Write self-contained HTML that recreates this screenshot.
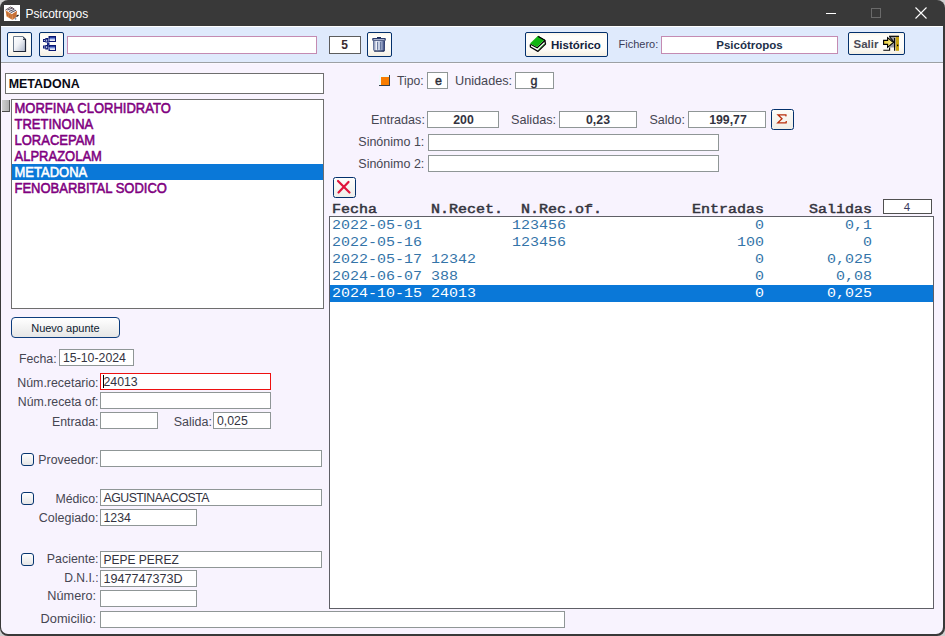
<!DOCTYPE html>
<html><head><meta charset="utf-8">
<style>
*{box-sizing:border-box;margin:0;padding:0}
html,body{width:945px;height:636px;overflow:hidden;background:#cfcfcf;font-family:"Liberation Sans",sans-serif;}
.a{position:absolute}
svg{position:absolute;overflow:visible}
</style></head><body>
<div class="a" style="left:0px;top:0px;width:945px;height:636px;background:#393939;border-radius:8px 8px 8px 8px;"></div>
<div class="a" style="left:1px;top:26px;width:942px;height:608px;background:#f8f3fe;border-radius:0 0 7px 7px;"></div>
<div class="a" style="left:1px;top:26px;width:942px;height:1px;background:#ffffff;"></div>
<div class="a" style="left:1px;top:27px;width:942px;height:35px;background:#dfeafc;"></div>
<div class="a" style="left:1px;top:62px;width:942px;height:1px;background:#9da0a4;"></div>
<div class="a" style="left:1px;top:63px;width:942px;height:1px;background:#fbf8ff;"></div>
<div class="a" style="left:25.5px;top:8.34px;font-size:12px;line-height:12px;font-weight:normal;color:#ffffff;font-family:'Liberation Sans',sans-serif;white-space:pre;">Psicotropos</div>
<svg style="left:4px;top:5px" width="16" height="16" viewBox="0 0 16 16">
<rect x="0" y="0" width="16" height="16" fill="#fff"/>
<path d="M1.5 5 L2.5 11.5 L8.5 15 L8 9 Z" fill="#de8a45"/>
<path d="M8 9 L13 5.5 L12.5 12 L8.5 15 Z" fill="#c87035"/>
<path d="M1.5 5 L6.5 2 L13 5.5 L8 9 Z" fill="#f2eef2"/>
<path d="M1.5 5 L6.5 2 L10 3.8" fill="none" stroke="#6a5a60" stroke-width="1"/>
<path d="M3.5 5 L8.5 3 M5 6.5 L10.5 4.2 M6.5 7.8 L12 5.2" stroke="#404050" stroke-width="0.9"/>
<path d="M3 7 L3.5 11 M5 8.5 L5.5 12.5 M7 9.5 L7 13.5" stroke="#8a4020" stroke-width="0.9" opacity="0.6"/>
<path d="M12.5 11.5 L14.5 10" stroke="#111" stroke-width="1.4"/>
<path d="M11 13 L12 14.5" stroke="#8090a8" stroke-width="1.5"/>
</svg>
<div class="a" style="left:826px;top:13px;width:10px;height:1px;background:#ffffff;"></div>
<div class="a" style="left:871px;top:8px;width:10px;height:10px;border:1px solid #6a6a6a;"></div>
<svg style="left:915px;top:7px" width="12" height="12" viewBox="0 0 12 12"><path d="M0.5 0.5 L11.5 11.5 M11.5 0.5 L0.5 11.5" stroke="#fff" stroke-width="1.1"/></svg>
<div class="a" style="left:7px;top:32px;width:25px;height:25px;border:1px solid #03306c;border-radius:2px;background:linear-gradient(#fbf3e4 0px,#fffefb 3px,#fdfcf8 70%,#f4eee2 100%);"></div>
<svg style="left:13px;top:36px" width="14" height="17" viewBox="0 0 14 17">
<defs><linearGradient id="gd" x1="0" y1="0" x2="1" y2="1"><stop offset="0" stop-color="#ffffff"/><stop offset="0.45" stop-color="#f0f2f6"/><stop offset="1" stop-color="#aab4c8"/></linearGradient></defs>
<path d="M0.5 0.5 H10 L12.5 3 V15.5 H0.5 Z" fill="url(#gd)" stroke="#6c7a8c" stroke-width="1"/>
<path d="M12.5 3 V15.5 H0.5" fill="none" stroke="#1e2636" stroke-width="1.2"/>
<path d="M10 0.5 L12.5 3 L12.5 4 L10 4 Z" fill="#1e2636"/>
<path d="M10.3 1.5 L10.3 3.2 L11.6 3.2 Z" fill="#d8e0f0"/>
</svg>
<div class="a" style="left:39px;top:32px;width:25px;height:25px;border:1px solid #03306c;border-radius:2px;background:linear-gradient(#fbf3e4 0px,#fffefb 3px,#fdfcf8 70%,#f4eee2 100%);"></div>
<svg style="left:43px;top:36px" width="14" height="16" viewBox="0 0 14 16">
<defs><linearGradient id="gt" x1="0" y1="0" x2="0" y2="1"><stop offset="0" stop-color="#2a48b0"/><stop offset="0.8" stop-color="#c8d6fa"/><stop offset="1" stop-color="#ffffff"/></linearGradient></defs>
<rect x="5.5" y="0" width="7.5" height="6" fill="#0a1670"/>
<rect x="7" y="1.3" width="5" height="3.4" fill="url(#gt)"/>
<rect x="7" y="3.8" width="5" height="0.9" fill="#ffffff"/>
<rect x="5.5" y="9" width="7.5" height="6" fill="#0a1670"/>
<rect x="7" y="10.3" width="5" height="3.4" fill="url(#gt)"/>
<rect x="7" y="12.8" width="5" height="0.9" fill="#ffffff"/>
<rect x="2.3" y="2" width="3.2" height="4.5" fill="#0a1670"/>
<rect x="0" y="3" width="2.5" height="3" fill="#0a1670"/>
<rect x="0.9" y="4" width="0.9" height="1" fill="#d8e4ff"/>
<rect x="3.2" y="3.6" width="1" height="2" fill="#e4ecff"/>
<rect x="5.6" y="2.5" width="0.9" height="2.5" fill="#c0d0ff"/>
<rect x="2.3" y="9" width="3.2" height="4.5" fill="#0a1670"/>
<rect x="0" y="9.5" width="2.5" height="3" fill="#0a1670"/>
<rect x="0.9" y="10.5" width="0.9" height="1" fill="#d8e4ff"/>
<rect x="3.2" y="10.2" width="1" height="2" fill="#e4ecff"/>
<rect x="5.6" y="11" width="0.9" height="2.5" fill="#c0d0ff"/>
<rect x="4" y="6.5" width="2.5" height="2.5" fill="#1a2a8a"/>
</svg>
<div class="a" style="left:67px;top:36px;width:250px;height:18px;background:#fff;border:1px solid #c48bb2;"></div>
<div class="a" style="left:329px;top:36px;width:32px;height:18px;background:#fff;border:1px solid #5d5d5d;"></div>
<div class="a" style="left:144.5px;width:400px;text-align:center;top:39.34px;font-size:12px;line-height:12px;font-weight:bold;color:#3a2a30;font-family:'Liberation Sans',sans-serif;white-space:pre;">5</div>
<div class="a" style="left:367px;top:32px;width:25px;height:25px;border:1px solid #03306c;border-radius:2px;background:linear-gradient(#fbf3e4 0px,#fffefb 3px,#fdfcf8 70%,#f4eee2 100%);"></div>
<svg style="left:369px;top:34px" width="22" height="20" viewBox="0 0 22 20">
<defs><linearGradient id="gb" x1="0" y1="0" x2="1" y2="0"><stop offset="0" stop-color="#6a78a0"/><stop offset="0.3" stop-color="#f2f5fb"/><stop offset="0.65" stop-color="#b4c0da"/><stop offset="1" stop-color="#3a4a80"/></linearGradient></defs>
<rect x="8" y="3" width="4" height="1.3" fill="#1a2a55"/>
<path d="M4.1 6.8 H15.7 L15.2 17.6 H5.2 Z" fill="url(#gb)"/>
<rect x="3.2" y="4.1" width="13.6" height="2.7" rx="0.8" fill="#2a3a6a"/>
<rect x="4.5" y="5" width="11" height="0.8" fill="#c8d0e4"/>
<path d="M4.6 7 V16.5 M8.6 7.8 V15.8 M11.6 7.8 V15.8" stroke="#54648e" stroke-width="0.9"/>
<path d="M15.3 7 V17" stroke="#1e2e60" stroke-width="1"/>
<rect x="5.2" y="16.4" width="10" height="1.3" fill="#1a2a55"/>
</svg>
<div class="a" style="left:525px;top:32px;width:83px;height:25px;border:1px solid #03306c;border-radius:2px;background:linear-gradient(#fbf3e4 0px,#fffefb 3px,#fdfcf8 70%,#f4eee2 100%);"></div>
<svg style="left:529px;top:35px" width="18" height="18" viewBox="0 0 18 18">
<path d="M1.3 8.6 L8.3 12.4 L15.5 5.5 L16.3 9 L9 16 L1.4 11.8 Z" fill="#fff"/>
<path d="M8.8 1.3 L15.7 5.2 L16.5 9 L9 16.4 L1.4 12 L1.3 9.5" fill="none" stroke="#000" stroke-width="1.3" stroke-linejoin="round"/>
<path d="M1.6 9.2 L8.2 12.8 L15.6 5.7" fill="none" stroke="#000" stroke-width="1.3"/>
<path d="M1 8.5 L8.8 1 L15.3 5 L8.1 11.9 Z" fill="#12b412"/>
<path d="M9.2 14.6 L15.6 8.6" stroke="#3cc03c" stroke-width="0.8"/>
<path d="M9.2 1.4 L15.8 5.3 L16 6.5" fill="none" stroke="#000" stroke-width="1.2"/>
</svg>
<div class="a" style="left:551px;top:39.77px;font-size:11.5px;line-height:11.5px;font-weight:bold;color:#13223e;font-family:'Liberation Sans',sans-serif;white-space:pre;">Histórico</div>
<div class="a" style="left:618.5px;top:39.29px;font-size:11px;line-height:11px;font-weight:normal;color:#3c3c58;font-family:'Liberation Sans',sans-serif;white-space:pre;">Fichero:</div>
<div class="a" style="left:661px;top:36px;width:177px;height:18px;background:#fff;border:1px solid #c48bb2;"></div>
<div class="a" style="left:549.5px;width:400px;text-align:center;top:40.27px;font-size:11.5px;line-height:11.5px;font-weight:bold;color:#22304a;font-family:'Liberation Sans',sans-serif;white-space:pre;">Psicótropos</div>
<div class="a" style="left:848px;top:32px;width:57px;height:23px;border:1px solid #03306c;border-radius:2px;background:linear-gradient(#fbf3e4 0px,#fffefb 3px,#fdfcf8 70%,#f4eee2 100%);"></div>
<div class="a" style="left:853.5px;top:38.77px;font-size:11.5px;line-height:11.5px;font-weight:bold;color:#4b4b56;font-family:'Liberation Sans',sans-serif;white-space:pre;">Salir</div>
<svg style="left:880px;top:33px" width="22" height="20" viewBox="0 0 22 20">
<defs><linearGradient id="ga" x1="0" y1="0" x2="1" y2="0"><stop offset="0" stop-color="#e8c830"/><stop offset="1" stop-color="#fff8a0"/></linearGradient></defs>
<rect x="9.5" y="3.5" width="6" height="11" fill="#9a9aa0"/>
<rect x="15.7" y="3.6" width="3.3" height="14.2" fill="#c8a412"/>
<path d="M9 3.3 H19" stroke="#000" stroke-width="1.2"/>
<path d="M9.8 4 L14.3 9.5" stroke="#000" stroke-width="1.1"/>
<path d="M14.6 5 V17.8" stroke="#000" stroke-width="1.1"/>
<rect x="17" y="11.6" width="1.3" height="1.6" fill="#000"/>
<path d="M3.6 7.4 H7.6 V4.6 L13.4 9.5 L7.6 14.3 V11.4 H3.6 Z" fill="url(#ga)" stroke="#000" stroke-width="1.1" stroke-linejoin="miter"/>
<path d="M3.3 17.2 H9.6 V14.6" fill="none" stroke="#000" stroke-width="1.1"/>
</svg>
<div class="a" style="left:5px;top:73px;width:319px;height:21px;background:#fff;border:1px solid #6e6e6e;"></div>
<div class="a" style="left:8.7px;top:77.76px;font-size:12.45px;line-height:12.45px;font-weight:bold;color:#0a0a14;font-family:'Liberation Sans',sans-serif;white-space:pre;">METADONA</div>
<div class="a" style="left:2px;top:100px;width:8px;height:12px;background:linear-gradient(90deg,#d0d0d0,#b0b0b0);border-bottom:1px solid #4a4a4a;border-right:1px solid #5a5a5a;"></div>
<div class="a" style="left:11px;top:99px;width:313px;height:210px;background:#fff;border:1px solid #6e6e6e;"></div>
<div class="a" style="left:14.5px;top:101.60px;font-size:13.0px;line-height:13.0px;font-weight:normal;color:#800080;font-family:'Liberation Sans',sans-serif;white-space:pre;-webkit-text-stroke:0.5px #800080;transform:scaleY(1.08);transform-origin:0 11.00px;">MORFINA CLORHIDRATO</div>
<div class="a" style="left:14.5px;top:117.60px;font-size:13.0px;line-height:13.0px;font-weight:normal;color:#800080;font-family:'Liberation Sans',sans-serif;white-space:pre;-webkit-text-stroke:0.5px #800080;transform:scaleY(1.08);transform-origin:0 11.00px;">TRETINOINA</div>
<div class="a" style="left:14.5px;top:133.60px;font-size:13.0px;line-height:13.0px;font-weight:normal;color:#800080;font-family:'Liberation Sans',sans-serif;white-space:pre;-webkit-text-stroke:0.5px #800080;transform:scaleY(1.08);transform-origin:0 11.00px;">LORACEPAM</div>
<div class="a" style="left:14.5px;top:149.60px;font-size:13.0px;line-height:13.0px;font-weight:normal;color:#800080;font-family:'Liberation Sans',sans-serif;white-space:pre;-webkit-text-stroke:0.5px #800080;transform:scaleY(1.08);transform-origin:0 11.00px;">ALPRAZOLAM</div>
<div class="a" style="left:12px;top:164px;width:311px;height:16px;background:#0a78d8;"></div>
<div class="a" style="left:14.5px;top:165.60px;font-size:13.0px;line-height:13.0px;font-weight:normal;color:#ffffff;font-family:'Liberation Sans',sans-serif;white-space:pre;-webkit-text-stroke:0.5px #ffffff;transform:scaleY(1.08);transform-origin:0 11.00px;">METADONA</div>
<div class="a" style="left:14.5px;top:181.60px;font-size:13.0px;line-height:13.0px;font-weight:normal;color:#800080;font-family:'Liberation Sans',sans-serif;white-space:pre;-webkit-text-stroke:0.5px #800080;transform:scaleY(1.08);transform-origin:0 11.00px;">FENOBARBITAL SODICO</div>
<div class="a" style="left:11px;top:317px;width:109px;height:21px;border:1px solid #0d3d7d;border-radius:4px;background:linear-gradient(#ffffff,#e6e6e6);"></div>
<div class="a" style="left:31.2px;top:323.49px;font-size:11px;line-height:11px;font-weight:normal;color:#0e1a30;font-family:'Liberation Sans',sans-serif;white-space:pre;">Nuevo apunte</div>
<div class="a" style="left:19px;top:352.79px;font-size:12.3px;line-height:12.3px;font-weight:normal;color:#464652;font-family:'Liberation Sans',sans-serif;white-space:pre;">Fecha:</div>
<div class="a" style="left:59px;top:349px;width:75px;height:17px;background:#fff;border:1px solid #8f9696;"></div>
<div class="a" style="left:63px;top:352.09px;font-size:12.3px;line-height:12.3px;font-weight:normal;color:#333340;font-family:'Liberation Sans',sans-serif;white-space:pre;">15-10-2024</div>
<div class="a" style="right:846.5px;top:377.00px;font-size:12.4px;line-height:12.4px;font-weight:normal;color:#464652;font-family:'Liberation Sans',sans-serif;white-space:pre;">Núm.recetario:</div>
<div class="a" style="left:100px;top:373px;width:171px;height:17px;background:#fff;border:1px solid #ee1010;"></div>
<div class="a" style="left:103px;top:375px;width:1px;height:13px;background:#000;"></div>
<div class="a" style="left:103.5px;top:376.09px;font-size:12.3px;line-height:12.3px;font-weight:normal;color:#333340;font-family:'Liberation Sans',sans-serif;white-space:pre;">24013</div>
<div class="a" style="right:846.5px;top:396.29px;font-size:12.3px;line-height:12.3px;font-weight:normal;color:#464652;font-family:'Liberation Sans',sans-serif;white-space:pre;">Núm.receta of:</div>
<div class="a" style="left:100px;top:392px;width:171px;height:17px;background:#fff;border:1px solid #8f9696;"></div>
<div class="a" style="right:846.5px;top:416.29px;font-size:12.3px;line-height:12.3px;font-weight:normal;color:#464652;font-family:'Liberation Sans',sans-serif;white-space:pre;">Entrada:</div>
<div class="a" style="left:100px;top:412px;width:58px;height:17px;background:#fff;border:1px solid #8f9696;"></div>
<div class="a" style="right:733px;top:416.12px;font-size:12.5px;line-height:12.5px;font-weight:normal;color:#464652;font-family:'Liberation Sans',sans-serif;white-space:pre;">Salida:</div>
<div class="a" style="left:213px;top:412px;width:58px;height:17px;background:#fff;border:1px solid #8f9696;"></div>
<div class="a" style="left:217px;top:414.59px;font-size:12.3px;line-height:12.3px;font-weight:normal;color:#333340;font-family:'Liberation Sans',sans-serif;white-space:pre;">0,025</div>
<div class="a" style="left:21px;top:453px;width:13px;height:13px;border:1px solid #07356f;border-radius:3px;background:linear-gradient(#ffffff,#e6e6e6);"></div>
<div class="a" style="right:846.5px;top:454.29px;font-size:12.3px;line-height:12.3px;font-weight:normal;color:#464652;font-family:'Liberation Sans',sans-serif;white-space:pre;">Proveedor:</div>
<div class="a" style="left:100px;top:450px;width:222px;height:17px;background:#fff;border:1px solid #8f9696;"></div>
<div class="a" style="left:21px;top:492px;width:13px;height:13px;border:1px solid #07356f;border-radius:3px;background:linear-gradient(#ffffff,#e6e6e6);"></div>
<div class="a" style="right:846.5px;top:492.79px;font-size:12.3px;line-height:12.3px;font-weight:normal;color:#464652;font-family:'Liberation Sans',sans-serif;white-space:pre;">Médico:</div>
<div class="a" style="left:100px;top:489px;width:222px;height:17px;background:#fff;border:1px solid #8f9696;"></div>
<div class="a" style="left:103.5px;top:491.79px;font-size:12.3px;line-height:12.3px;font-weight:normal;color:#333340;font-family:'Liberation Sans',sans-serif;white-space:pre;letter-spacing:-0.5px;">AGUSTINAACOSTA</div>
<div class="a" style="right:846.5px;top:511.92px;font-size:12.5px;line-height:12.5px;font-weight:normal;color:#464652;font-family:'Liberation Sans',sans-serif;white-space:pre;">Colegiado:</div>
<div class="a" style="left:100px;top:509px;width:97px;height:17px;background:#fff;border:1px solid #8f9696;"></div>
<div class="a" style="left:103.5px;top:511.59px;font-size:12.3px;line-height:12.3px;font-weight:normal;color:#333340;font-family:'Liberation Sans',sans-serif;white-space:pre;">1234</div>
<div class="a" style="left:21px;top:553px;width:13px;height:13px;border:1px solid #07356f;border-radius:3px;background:linear-gradient(#ffffff,#e6e6e6);"></div>
<div class="a" style="right:846.5px;top:552.70px;font-size:12.4px;line-height:12.4px;font-weight:normal;color:#464652;font-family:'Liberation Sans',sans-serif;white-space:pre;">Paciente:</div>
<div class="a" style="left:100px;top:551px;width:222px;height:17px;background:#fff;border:1px solid #8f9696;"></div>
<div class="a" style="left:103.5px;top:553.84px;font-size:12px;line-height:12px;font-weight:normal;color:#333340;font-family:'Liberation Sans',sans-serif;white-space:pre;">PEPE PEREZ</div>
<div class="a" style="right:846.5px;top:572.06px;font-size:12.1px;line-height:12.1px;font-weight:normal;color:#464652;font-family:'Liberation Sans',sans-serif;white-space:pre;">D.N.I.:</div>
<div class="a" style="left:100px;top:570px;width:97px;height:17px;background:#fff;border:1px solid #8f9696;"></div>
<div class="a" style="left:103.5px;top:573.33px;font-size:12.6px;line-height:12.6px;font-weight:normal;color:#333340;font-family:'Liberation Sans',sans-serif;white-space:pre;">1947747373D</div>
<div class="a" style="right:849px;top:590.45px;font-size:12.7px;line-height:12.7px;font-weight:normal;color:#464652;font-family:'Liberation Sans',sans-serif;white-space:pre;">Número:</div>
<div class="a" style="left:100px;top:590px;width:97px;height:17px;background:#fff;border:1px solid #8f9696;"></div>
<div class="a" style="right:849px;top:613.16px;font-size:12.8px;line-height:12.8px;font-weight:normal;color:#464652;font-family:'Liberation Sans',sans-serif;white-space:pre;">Domicilio:</div>
<div class="a" style="left:100px;top:611px;width:465px;height:17px;background:#fff;border:1px solid #8f9696;"></div>
<div class="a" style="left:379px;top:75px;width:11px;height:11px;background:#eef8fc;"></div>
<div class="a" style="left:389px;top:75px;width:1px;height:11px;background:#34404c;"></div>
<div class="a" style="left:379px;top:85px;width:11px;height:1px;background:#34404c;"></div>
<div class="a" style="left:381px;top:77px;width:8px;height:8px;background:#f97d00;"></div>
<div class="a" style="left:397px;top:75.07px;font-size:12.2px;line-height:12.2px;font-weight:normal;color:#464652;font-family:'Liberation Sans',sans-serif;white-space:pre;">Tipo:</div>
<div class="a" style="left:427px;top:72px;width:21px;height:17px;background:#fff;border:1px solid #8f9696;"></div>
<div class="a" style="left:238.5px;width:400px;text-align:center;top:75.42px;font-size:12.5px;line-height:12.5px;font-weight:normal;color:#2a2a36;font-family:'Liberation Sans',sans-serif;white-space:pre;-webkit-text-stroke:0.4px #2a2a36;">e</div>
<div class="a" style="left:455px;top:75.45px;font-size:12.7px;line-height:12.7px;font-weight:normal;color:#464652;font-family:'Liberation Sans',sans-serif;white-space:pre;">Unidades:</div>
<div class="a" style="left:515px;top:72px;width:39px;height:17px;background:#fff;border:1px solid #8f9696;"></div>
<div class="a" style="left:334px;width:400px;text-align:center;top:75.42px;font-size:12.5px;line-height:12.5px;font-weight:normal;color:#2a2a36;font-family:'Liberation Sans',sans-serif;white-space:pre;-webkit-text-stroke:0.4px #2a2a36;">g</div>
<div class="a" style="left:371px;top:114.03px;font-size:12.6px;line-height:12.6px;font-weight:normal;color:#464652;font-family:'Liberation Sans',sans-serif;white-space:pre;">Entradas:</div>
<div class="a" style="left:427px;top:111px;width:72px;height:17px;background:#fff;border:1px solid #8f9696;"></div>
<div class="a" style="left:263.5px;width:400px;text-align:center;top:113.59px;font-size:12.3px;line-height:12.3px;font-weight:bold;color:#333340;font-family:'Liberation Sans',sans-serif;white-space:pre;">200</div>
<div class="a" style="left:511px;top:113.95px;font-size:12.7px;line-height:12.7px;font-weight:normal;color:#464652;font-family:'Liberation Sans',sans-serif;white-space:pre;">Salidas:</div>
<div class="a" style="left:559px;top:111px;width:78px;height:17px;background:#fff;border:1px solid #8f9696;"></div>
<div class="a" style="left:398px;width:400px;text-align:center;top:113.59px;font-size:12.3px;line-height:12.3px;font-weight:bold;color:#333340;font-family:'Liberation Sans',sans-serif;white-space:pre;">0,23</div>
<div class="a" style="left:649.5px;top:114.12px;font-size:12.5px;line-height:12.5px;font-weight:normal;color:#464652;font-family:'Liberation Sans',sans-serif;white-space:pre;">Saldo:</div>
<div class="a" style="left:688px;top:111px;width:78px;height:17px;background:#fff;border:1px solid #8f9696;"></div>
<div class="a" style="left:528px;width:400px;text-align:center;top:113.59px;font-size:12.3px;line-height:12.3px;font-weight:bold;color:#333340;font-family:'Liberation Sans',sans-serif;white-space:pre;">199,77</div>
<div class="a" style="left:771px;top:109px;width:23px;height:21px;border:1px solid #03306c;border-radius:2.5px;background:linear-gradient(#fdfcf8,#f0ede6);"></div>
<svg style="left:776.5px;top:113.5px" width="11" height="11" viewBox="0 0 11 11"><path d="M9 2.4 L8.9 0.8 H1 L5 4.8 L0.8 8.9 H9.1 L9.3 7" fill="none" stroke="#b82e0c" stroke-width="1.3" stroke-linejoin="miter"/></svg>
<div class="a" style="right:520.7px;top:136.12px;font-size:12.5px;line-height:12.5px;font-weight:normal;color:#464652;font-family:'Liberation Sans',sans-serif;white-space:pre;">Sinónimo 1:</div>
<div class="a" style="left:428px;top:134px;width:291px;height:17px;background:#fff;border:1px solid #8f9696;"></div>
<div class="a" style="right:520.7px;top:157.72px;font-size:12.5px;line-height:12.5px;font-weight:normal;color:#464652;font-family:'Liberation Sans',sans-serif;white-space:pre;">Sinónimo 2:</div>
<div class="a" style="left:428px;top:155px;width:291px;height:17px;background:#fff;border:1px solid #8f9696;"></div>
<div class="a" style="left:333px;top:177px;width:23px;height:21px;border:1px solid #03306c;border-radius:2.5px;background:linear-gradient(#fdfdfb,#eeeeea);"></div>
<svg style="left:337px;top:180px" width="14" height="14" viewBox="0 0 14 14"><path d="M1 1 L12.5 12.5 M11.5 2 L1.5 12.5" stroke="#e0143c" stroke-width="2.2" stroke-linecap="round"/></svg>
<div class="a" style="left:332px;top:202.31px;font-size:15px;line-height:15px;font-weight:normal;color:#34343e;font-family:'Liberation Mono',monospace;white-space:pre;-webkit-text-stroke:0.55px #34343e;transform:scaleY(0.82);transform-origin:0 11.49px;">Fecha</div>
<div class="a" style="left:431px;top:202.31px;font-size:15px;line-height:15px;font-weight:normal;color:#34343e;font-family:'Liberation Mono',monospace;white-space:pre;-webkit-text-stroke:0.55px #34343e;transform:scaleY(0.82);transform-origin:0 11.49px;">N.Recet.</div>
<div class="a" style="left:521px;top:202.31px;font-size:15px;line-height:15px;font-weight:normal;color:#34343e;font-family:'Liberation Mono',monospace;white-space:pre;-webkit-text-stroke:0.55px #34343e;transform:scaleY(0.82);transform-origin:0 11.49px;">N.Rec.of.</div>
<div class="a" style="left:692px;top:202.31px;font-size:15px;line-height:15px;font-weight:normal;color:#34343e;font-family:'Liberation Mono',monospace;white-space:pre;-webkit-text-stroke:0.55px #34343e;transform:scaleY(0.82);transform-origin:0 11.49px;">Entradas</div>
<div class="a" style="left:809px;top:202.31px;font-size:15px;line-height:15px;font-weight:normal;color:#34343e;font-family:'Liberation Mono',monospace;white-space:pre;-webkit-text-stroke:0.55px #34343e;transform:scaleY(0.82);transform-origin:0 11.49px;">Salidas</div>
<div class="a" style="left:883px;top:199px;width:49px;height:15px;background:#fff;border:1px solid #505050;"></div>
<div class="a" style="left:707px;width:400px;text-align:center;top:202.27px;font-size:11.5px;line-height:11.5px;font-weight:normal;color:#3a3a60;font-family:'Liberation Sans',sans-serif;white-space:pre;">4</div>
<div class="a" style="left:329px;top:216px;width:605px;height:393px;background:#fff;border:1px solid #5f5f66;"></div>
<div class="a" style="left:332px;top:217.71px;font-size:15px;line-height:15px;font-weight:normal;color:#3474a8;font-family:'Liberation Mono',monospace;white-space:pre;transform:scaleY(0.9);transform-origin:0 11.49px;">2022-05-01</div>
<div class="a" style="left:512px;top:217.71px;font-size:15px;line-height:15px;font-weight:normal;color:#3474a8;font-family:'Liberation Mono',monospace;white-space:pre;transform:scaleY(0.9);transform-origin:0 11.49px;">123456</div>
<div class="a" style="right:181px;top:217.71px;font-size:15px;line-height:15px;font-weight:normal;color:#3474a8;font-family:'Liberation Mono',monospace;white-space:pre;transform:scaleY(0.9);transform-origin:0 11.49px;">0</div>
<div class="a" style="right:73px;top:217.71px;font-size:15px;line-height:15px;font-weight:normal;color:#3474a8;font-family:'Liberation Mono',monospace;white-space:pre;transform:scaleY(0.9);transform-origin:0 11.49px;">0,1</div>
<div class="a" style="left:332px;top:234.71px;font-size:15px;line-height:15px;font-weight:normal;color:#3474a8;font-family:'Liberation Mono',monospace;white-space:pre;transform:scaleY(0.9);transform-origin:0 11.49px;">2022-05-16</div>
<div class="a" style="left:512px;top:234.71px;font-size:15px;line-height:15px;font-weight:normal;color:#3474a8;font-family:'Liberation Mono',monospace;white-space:pre;transform:scaleY(0.9);transform-origin:0 11.49px;">123456</div>
<div class="a" style="right:181px;top:234.71px;font-size:15px;line-height:15px;font-weight:normal;color:#3474a8;font-family:'Liberation Mono',monospace;white-space:pre;transform:scaleY(0.9);transform-origin:0 11.49px;">100</div>
<div class="a" style="right:73px;top:234.71px;font-size:15px;line-height:15px;font-weight:normal;color:#3474a8;font-family:'Liberation Mono',monospace;white-space:pre;transform:scaleY(0.9);transform-origin:0 11.49px;">0</div>
<div class="a" style="left:332px;top:251.71px;font-size:15px;line-height:15px;font-weight:normal;color:#3474a8;font-family:'Liberation Mono',monospace;white-space:pre;transform:scaleY(0.9);transform-origin:0 11.49px;">2022-05-17</div>
<div class="a" style="left:431px;top:251.71px;font-size:15px;line-height:15px;font-weight:normal;color:#3474a8;font-family:'Liberation Mono',monospace;white-space:pre;transform:scaleY(0.9);transform-origin:0 11.49px;">12342</div>
<div class="a" style="right:181px;top:251.71px;font-size:15px;line-height:15px;font-weight:normal;color:#3474a8;font-family:'Liberation Mono',monospace;white-space:pre;transform:scaleY(0.9);transform-origin:0 11.49px;">0</div>
<div class="a" style="right:73px;top:251.71px;font-size:15px;line-height:15px;font-weight:normal;color:#3474a8;font-family:'Liberation Mono',monospace;white-space:pre;transform:scaleY(0.9);transform-origin:0 11.49px;">0,025</div>
<div class="a" style="left:332px;top:268.71px;font-size:15px;line-height:15px;font-weight:normal;color:#3474a8;font-family:'Liberation Mono',monospace;white-space:pre;transform:scaleY(0.9);transform-origin:0 11.49px;">2024-06-07</div>
<div class="a" style="left:431px;top:268.71px;font-size:15px;line-height:15px;font-weight:normal;color:#3474a8;font-family:'Liberation Mono',monospace;white-space:pre;transform:scaleY(0.9);transform-origin:0 11.49px;">388</div>
<div class="a" style="right:181px;top:268.71px;font-size:15px;line-height:15px;font-weight:normal;color:#3474a8;font-family:'Liberation Mono',monospace;white-space:pre;transform:scaleY(0.9);transform-origin:0 11.49px;">0</div>
<div class="a" style="right:73px;top:268.71px;font-size:15px;line-height:15px;font-weight:normal;color:#3474a8;font-family:'Liberation Mono',monospace;white-space:pre;transform:scaleY(0.9);transform-origin:0 11.49px;">0,08</div>
<div class="a" style="left:330px;top:285px;width:603px;height:17px;background:#0a78d8;"></div>
<div class="a" style="left:332px;top:285.71px;font-size:15px;line-height:15px;font-weight:normal;color:#ffffff;font-family:'Liberation Mono',monospace;white-space:pre;transform:scaleY(0.9);transform-origin:0 11.49px;">2024-10-15</div>
<div class="a" style="left:431px;top:285.71px;font-size:15px;line-height:15px;font-weight:normal;color:#ffffff;font-family:'Liberation Mono',monospace;white-space:pre;transform:scaleY(0.9);transform-origin:0 11.49px;">24013</div>
<div class="a" style="right:181px;top:285.71px;font-size:15px;line-height:15px;font-weight:normal;color:#ffffff;font-family:'Liberation Mono',monospace;white-space:pre;transform:scaleY(0.9);transform-origin:0 11.49px;">0</div>
<div class="a" style="right:73px;top:285.71px;font-size:15px;line-height:15px;font-weight:normal;color:#ffffff;font-family:'Liberation Mono',monospace;white-space:pre;transform:scaleY(0.9);transform-origin:0 11.49px;">0,025</div>
</body></html>
